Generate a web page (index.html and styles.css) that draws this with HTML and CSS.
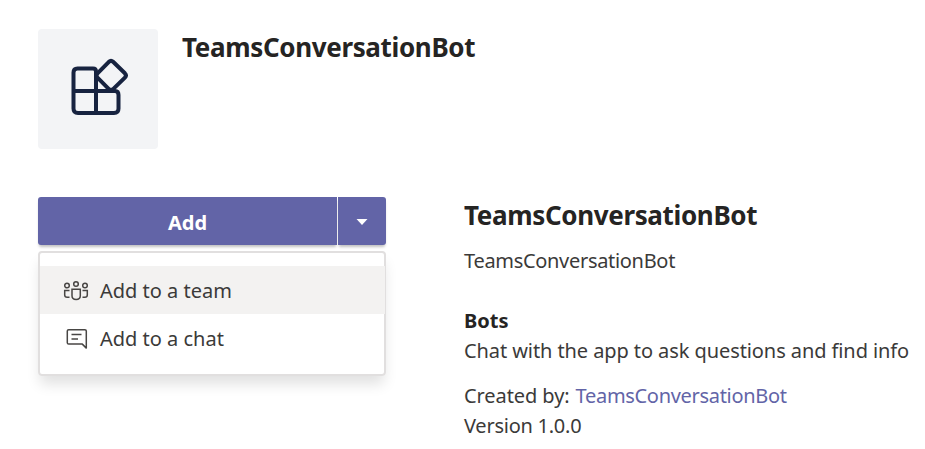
FILE: index.html
```html
<!DOCTYPE html>
<html lang="en">
<head>
<meta charset="utf-8">
<title>TeamsConversationBot</title>
<link rel="stylesheet" href="styles.css">
</head>
<body>
<header class="app-header">
  <div class="app-icon">
    <svg width="120" height="120" viewBox="0 0 120 120" fill="none" stroke="#172340" stroke-width="4" stroke-linejoin="round">
      <path d="M58 43.500V42.500Q58 39.500 55 39.500H39.500Q35.500 39.500 35.500 43.500V79.500Q35.500 84 40 84H76Q80.500 84 80.500 79.500V66Q80.500 62 77 62H35.500M58 43V84"/>
      <path d="M70.900 32.800Q73 30.900 75.100 32.800L86.900 44.300Q89 46.500 86.900 48.600L75.100 60.100Q73 62 70.900 60.100L59.500 48.600Q57.400 46.500 59.500 44.300Z"/>
    </svg>
  </div>
  <h1 class="app-title"><span class="t-head">TeamsConversationBot</span></h1>
</header>
<main class="content">
  <section class="actions">
    <div class="split-button">
      <button class="add">Add</button>
      <button class="toggle" aria-label="More add options"><svg width="12" height="6" viewBox="0 0 12 6"><path d="M.5 0h11L6 6z" fill="#fff"/></svg></button>
    </div>
    <ul class="menu">
      <li class="item active">
        <svg class="item-icon" width="26" height="24" viewBox="0 0 26 24" fill="none" stroke="#484644" stroke-width="1.500">
          <circle cx="4" cy="6.500" r="2.300"/><circle cx="13" cy="5" r="2.300"/><circle cx="22" cy="6.500" r="2.300"/>
          <path d="M9 10.300h8.300v6.500q0 3.700-4.150 3.700T9 16.800zM6.500 11.500H1.700v4.500q0 2.300 2.500 2.300h2.300M19.500 11.500h4.800v4.500q0 2.300-2.500 2.300h-2.300"/>
        </svg>
        <span class="t-item">Add to a team</span>
      </li>
      <li class="item">
        <svg class="item-icon" width="26" height="24" viewBox="0 0 26 24" fill="none" stroke="#484644" stroke-width="1.500" stroke-linejoin="round">
          <path d="M5.700 2.700h16.200q1.400 0 1.400 1.400v17l-4-4H5.700q-1.400 0-1.400-1.400V4.100q0-1.400 1.400-1.400zM8.500 7.500h10M8.500 12h6.500"/>
        </svg>
        <span class="t-item">Add to a chat</span>
      </li>
    </ul>
  </section>
  <section class="details">
    <h2 class="details-title"><span class="t-head">TeamsConversationBot</span></h2>
    <p class="summary"><span class="t-name">TeamsConversationBot</span></p>
    <h3 class="subhead">Bots</h3>
    <p class="description">Chat with the app to ask questions and find info</p>
    <p class="creator"><span class="t-created">Created by:</span><a class="link t-name">TeamsConversationBot</a></p>
    <p class="version">Version 1.0.0</p>
  </section>
</main>
</body>
</html>
```
FILE: styles.css
```css
* { box-sizing: border-box; }
body {
  margin: 0;
  padding: 29px 0 0 38px;
  background: #fff;
  color: #3b3a39;
  font: 400 20px/30px "Noto Sans", "Open Sans", sans-serif;
  overflow: hidden;
  white-space: nowrap;
}
h1, h2, h3, p, ul { margin: 0; padding: 0; }
svg { display: block; flex: none; }
.app-header { display: flex; gap: 24px; height: 168px; }
.app-icon { width: 120px; height: 120px; border-radius: 4px; background: #f3f4f6; }
.app-title, .details-title { color: #252423; font-size: 26px; line-height: 36px; font-weight: 700; }
.t-head { letter-spacing: -.35px; }
.t-name { letter-spacing: -.31px; }
.t-created { letter-spacing: -.08px; }
.content { display: flex; gap: 78px; }
.actions { width: 348px; }
.split-button { display: flex; gap: 1px; height: 48px; }
.add, .toggle {
  display: flex;
  align-items: center;
  justify-content: center;
  padding: 0;
  border: 0;
  background: #6264a7;
  color: #fff;
  font: inherit;
  font-weight: 700;
  box-shadow: 0 3px 3px -1px rgba(0, 0, 0, .25);
}
.add { width: 299px; padding-top: 3px; border-radius: 3px 0 0 3px; }
.toggle { width: 48px; padding-top: 2px; border-radius: 0 3px 3px 0; }
.menu {
  height: 125px;
  margin-top: 6px;
  padding-top: 13px;
  list-style: none;
  border: 2px solid #e1dfdf;
  border-radius: 4px;
  box-shadow: 0 10px 14px -2px rgba(0, 0, 0, .12);
}
.item { display: flex; align-items: center; gap: 11px; height: 48px; padding: 2px 0 0 23px; margin-right: -1px; }
.active { background: #f3f2f1; }
.details-title { height: 49px; }
.summary { height: 60px; }
.subhead { color: #252423; font-size: 20px; line-height: 30px; font-weight: 700; }
.description { height: 45px; letter-spacing: -.085px; }
.creator { display: flex; gap: 6px; }
.version { letter-spacing: -.25px; }
.link { color: #6264a7; }
```
